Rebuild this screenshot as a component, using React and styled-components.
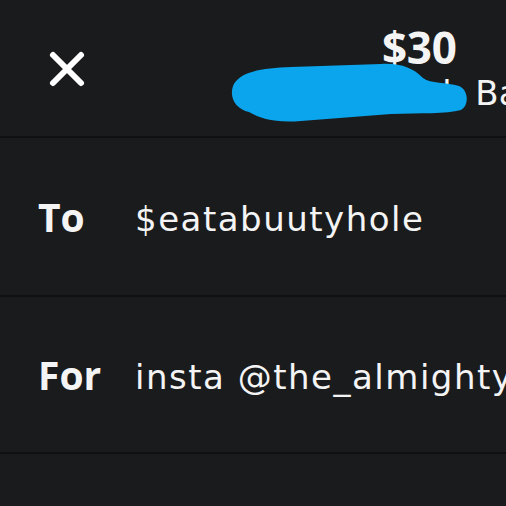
import React from "react";
import styled, { createGlobalStyle } from "styled-components";

const Global = createGlobalStyle`
  html, body { margin: 0; padding: 0; background: #1a1b1d; }
  body { font-family: "Open Sans", "Liberation Sans", sans-serif; }
`;

const Page = styled.div`
  width: 506px;
  height: 506px;
  overflow: hidden;
  background: #1a1b1d;
  color: #f4f4f4;
  display: flex;
  flex-direction: column;
`;

const Header = styled.div`
  position: relative;
  height: 136px;
  flex: none;
  display: flex;
  align-items: flex-start;
  padding-left: 47px;
  border-bottom: 2px solid #0f1012;
`;

const CloseButton = styled.div`
  width: 40px;
  height: 38px;
  margin-top: 50px;
  flex: none;
  display: flex;
`;

const Summary = styled.div`
  margin-left: 295px;
  display: flex;
  flex-direction: column;
  white-space: nowrap;
  padding-top: 21px;
`;

const Amount = styled.div`
  font-size: 44px;
  font-weight: 700;
  line-height: 52px;
  letter-spacing: -0.3px;
`;

const Source = styled.div`
  font-family: "DejaVu Sans", sans-serif;
  font-size: 34px;
  font-weight: 400;
  line-height: 40px;
  letter-spacing: 0.3px;
  margin-left: -3px;
`;

const Scribble = styled.svg`
  position: absolute;
  left: 231px;
  top: 62px;
  width: 237px;
  height: 63px;
`;

const Row = styled.div`
  height: ${(p) => p.$h}px;
  flex: none;
  display: flex;
  align-items: center;
  padding-left: 38px;
  border-bottom: 2px solid #0f1012;
  white-space: nowrap;
`;

const Label = styled.div`
  width: 97px;
  flex: none;
  font-size: 39px;
  font-weight: 700;
`;

const Value = styled.div`
  font-family: "DejaVu Sans", sans-serif;
  font-size: 34px;
  font-weight: 400;
  letter-spacing: 1.5px;
  padding-top: 4px;
`;

export default function App() {
  return (
    <Page>
      <Global />
      <Header>
        <CloseButton>
          <svg width="40" height="38" viewBox="0 0 40 38">
            <path
              d="M6 5 L34 33 M34 5 L6 33"
              stroke="#ffffff"
              strokeWidth="6"
              strokeLinecap="round"
              fill="none"
            />
          </svg>
        </CloseButton>
        <Summary>
          <Amount>$30</Amount>
          <Source>Cash Balance</Source>
        </Summary>
        <Scribble viewBox="0 0 237 63">
          <path
            d="M2 24 C8 10, 30 6, 60 5 L150 2 C170 1, 182 6, 192 16 C200 22, 215 20, 228 24 C238 28, 238 44, 230 48 C215 52, 190 51, 160 52 L70 59 C45 61, 30 57, 18 50 C5 47, -2 36, 2 24 Z"
            fill="#0aa5ec"
          />
        </Scribble>
      </Header>
      <Row $h={157}>
        <Label>To</Label>
        <Value>$eatabuutyhole</Value>
      </Row>
      <Row $h={155}>
        <Label>For</Label>
        <Value>insta @the_almighty</Value>
      </Row>
    </Page>
  );
}
